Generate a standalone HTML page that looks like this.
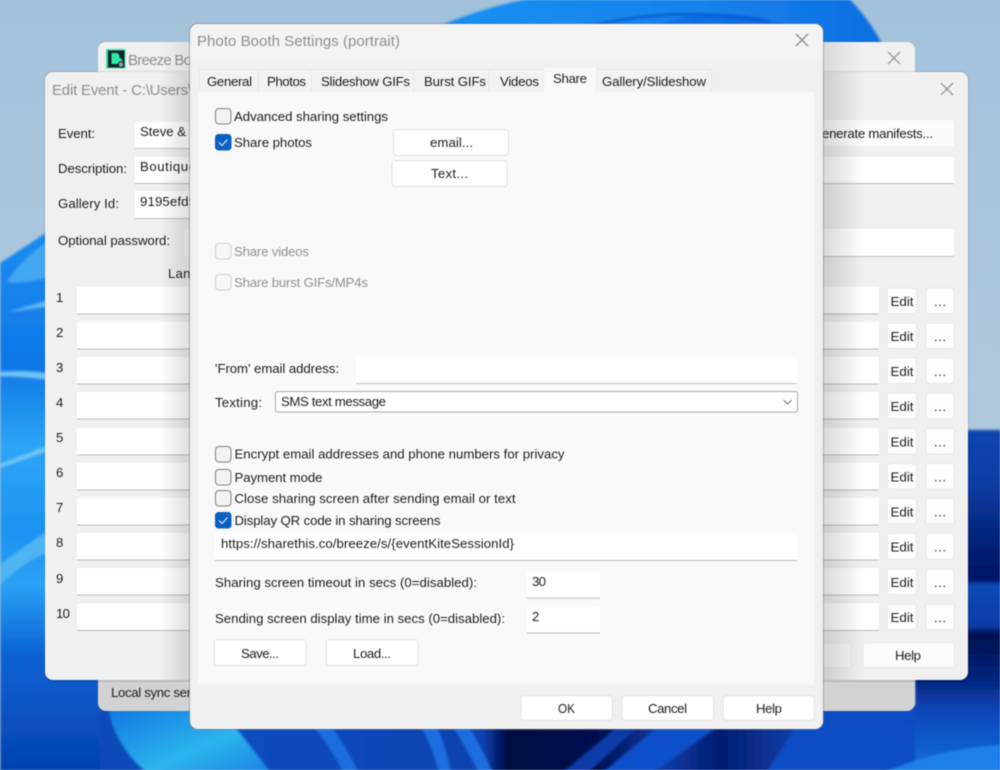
<!DOCTYPE html>
<html><head><meta charset="utf-8"><title>Photo Booth Settings</title>
<style>
html,body{margin:0;padding:0;background:#a5c3db}
body{width:1000px;height:770px;overflow:hidden}
svg{display:block;filter:blur(.45px)}
text{font-family:"Liberation Sans",sans-serif;font-size:13.2px;fill:#1c1c1c}
.d{fill:#8f8f8f}
.t{font-size:15px;fill:#8e8e8e}
</style></head><body>
<svg width="1000" height="770" viewBox="0 0 1000 770" xmlns="http://www.w3.org/2000/svg">
<defs>
<linearGradient id="sky" x1="0" y1="0" x2="0" y2="1"><stop offset="0" stop-color="#a3c2da"/><stop offset=".5" stop-color="#afc9de"/><stop offset="1" stop-color="#a8c5dc"/></linearGradient>
<linearGradient id="lft" x1="0" y1="0" x2="0" y2="1"><stop offset="0" stop-color="#1a8cf0"/><stop offset=".25" stop-color="#0e78e6"/><stop offset=".4" stop-color="#2ca6f6"/><stop offset=".55" stop-color="#1c92f2"/><stop offset=".65" stop-color="#2aa2f4"/><stop offset=".78" stop-color="#0a62d4"/><stop offset="1" stop-color="#0540ae"/></linearGradient>
<linearGradient id="bot" x1="0" y1="0" x2="1" y2="0"><stop offset="0" stop-color="#0748b8"/><stop offset=".16" stop-color="#0a4cc0"/><stop offset=".47" stop-color="#0a42b0"/><stop offset=".5" stop-color="#020a40"/><stop offset=".61" stop-color="#031050"/><stop offset=".69" stop-color="#0a3ca8"/><stop offset=".76" stop-color="#041c70"/><stop offset=".84" stop-color="#0a3aa0"/><stop offset=".87" stop-color="#0b4ec4"/><stop offset="1" stop-color="#0b4cc2"/></linearGradient>
<linearGradient id="rgt" x1="0" y1="0" x2="0" y2="1"><stop offset="0" stop-color="#0b46b0"/><stop offset=".145" stop-color="#0a3ea4"/><stop offset=".377" stop-color="#021a6c"/><stop offset=".435" stop-color="#02186a"/><stop offset=".449" stop-color="#0c49b5"/><stop offset=".565" stop-color="#0a3ca8"/><stop offset=".594" stop-color="#02104e"/><stop offset=".725" stop-color="#05267f"/><stop offset=".814" stop-color="#0a46b8"/><stop offset="1" stop-color="#1670dc"/></linearGradient>
<linearGradient id="top" x1="0" y1="0" x2="1" y2="0"><stop offset="0" stop-color="#1a90f2"/><stop offset=".6" stop-color="#1482ec"/><stop offset="1" stop-color="#0f6ee0"/></linearGradient>
<linearGradient id="cy" x1="0" y1="0" x2="1" y2="1"><stop offset="0" stop-color="#0d6fe0"/><stop offset=".6" stop-color="#2cb4ec"/><stop offset="1" stop-color="#1a80e4"/></linearGradient>
<linearGradient id="sl" x1="0" x2="1"><stop offset="0" stop-color="#000" stop-opacity="0"/><stop offset="1" stop-color="#000" stop-opacity=".13"/></linearGradient>
<linearGradient id="sr" x1="0" x2="1"><stop offset="0" stop-color="#000" stop-opacity=".15"/><stop offset="1" stop-color="#000" stop-opacity="0"/></linearGradient>
<filter id="bb" x="-10%" y="-10%" width="120%" height="120%"><feGaussianBlur stdDeviation="1.2"/></filter>
<g id="rowR"><rect x="887" y="0" width="29.5" height="25.5" rx="3" fill="#fdfdfd" stroke="#e4e4e4" stroke-width=".8"/><rect x="926" y="0" width="28" height="25.5" rx="3" fill="#fdfdfd" stroke="#e4e4e4" stroke-width=".8"/><text x="890.5" y="18" textLength="23" lengthAdjust="spacingAndGlyphs">Edit</text><text x="934" y="18" textLength="12" lengthAdjust="spacing">...</text></g>
</defs>

<!-- wallpaper -->
<rect width="1000" height="770" fill="url(#sky)"/>
<g filter="url(#bb)">
<path d="M0 263 Q25 247 50 230 L110 230 L110 775 L0 775Z" fill="url(#lft)"/>
<path d="M7 282 Q22 258 50 240 L50 277 Q25 284 7 282Z" fill="#42a8f2"/>
<path d="M8 312 L50 300 L50 306 Z" fill="#5dbcf5"/>
<path d="M0 372 Q25 370 50 374 L50 380 Q25 376 0 376Z" fill="#6cc6f8"/>
<path d="M0 464 L50 445 L50 450 L0 468Z" fill="#6ec6f6"/>
<path d="M0 565 Q25 545 50 530 L50 552 Q25 560 0 585Z" fill="#50b4f2"/>
<path d="M430 30 Q520 -10 620 -10 L840 -10 Q868 15 884 48 L430 48Z" fill="url(#top)"/>
<path d="M640 30 Q720 0 790 26 L800 34 L640 34Z" fill="#0e6ae0" opacity=".8"/>
<path d="M590 26 Q680 5 770 22" fill="none" stroke="#0b5ad0" stroke-width="3"/>
<rect x="915" y="430" width="95" height="345" fill="url(#rgt)"/>
<rect x="100" y="705" width="815" height="70" fill="url(#bot)"/>
<path d="M107 700 Q112 745 150 775 L272 775 Q250 745 225 715 L200 700Z" fill="url(#cy)"/>
<path d="M312 725 Q330 745 345 775 L360 775 Q345 745 330 725Z" fill="#1d6ee0"/>
<path d="M420 725 Q432 745 440 775 L452 775 Q445 745 436 725Z" fill="#1d6ee0"/>
<path d="M452 725 Q465 745 480 775 L494 775 Q480 745 468 725Z" fill="#1d6ee0"/>
<path d="M560 775 L620 725 L640 725 L585 775Z" fill="#0a3aa8"/>
<path d="M600 775 L660 725 L720 725 L650 775Z" fill="#0b50c8"/>
<path d="M797 725 L765 775 L915 775 L915 725Z" fill="#0b4ec4"/>
<path d="M880 775 Q930 750 1000 745 L1000 775Z" fill="#1a80e8"/>
</g>

<!-- Breeze window -->
<path d="M98 50 a8 8 0 0 1 8 -8 h801 a8 8 0 0 1 8 8 v653 a8 8 0 0 1 -8 8 h-801 a8 8 0 0 1 -8 -8z" fill="#d2d2d2"/>
<path d="M98 72 V50 a8 8 0 0 1 8 -8 h801 a8 8 0 0 1 8 8 v22z" fill="#f0f0f0"/>
<rect x="106" y="49" width="19.5" height="19.5" fill="#2ee8a0"/>
<rect x="108" y="50.5" width="16.5" height="17" fill="#18222e"/>
<path d="M111.5 53 h4.5 q3.5 0 3.5 4 v1 q3 .5 3 4 v2 h-11z" fill="#2ee8a0"/>
<circle cx="121" cy="64.5" r="2.7" fill="#9aa2aa" stroke="#18222e"/>
<text class="t" x="128" y="65" textLength="64" lengthAdjust="spacing">Breeze Bo</text>
<path d="M888 52 L900 64 M900 52 L888 64" stroke="#8b8b8b" stroke-width="1.2" fill="none"/>
<text x="111" y="697" textLength="80" lengthAdjust="spacing">Local sync ser</text>

<!-- Edit Event window -->
<rect x="44" y="71" width="925" height="611" rx="8.5" fill="#000" opacity=".1"/>
<rect x="45" y="72" width="923" height="608" rx="8" fill="#f0f0f0"/>
<text class="t" x="52" y="95" textLength="140" lengthAdjust="spacing">Edit Event - C:\Users\</text>
<path d="M941 83 L953 95 M953 83 L941 95" stroke="#8b8b8b" stroke-width="1.2" fill="none"/>
<text x="58" y="138" textLength="37" lengthAdjust="spacing">Event:</text>
<text x="58" y="173" textLength="69" lengthAdjust="spacing">Description:</text>
<text x="58" y="208" textLength="61" lengthAdjust="spacing">Gallery Id:</text>
<text x="58" y="245" textLength="112" lengthAdjust="spacing">Optional password:</text>
<text x="168" y="278" textLength="30" lengthAdjust="spacing">Lang</text>
<g fill="#fff" stroke="none">
<rect x="135" y="122" width="60" height="26"/><rect x="135" y="157" width="60" height="26"/><rect x="135" y="191" width="60" height="27"/>
<rect x="184" y="229" width="10" height="27" fill="#f8f8f8"/>
<rect x="820" y="157" width="134" height="26"/><rect x="820" y="229" width="134" height="27"/>
<rect x="820" y="120" width="134" height="26" rx="3" fill="#fbfbfb"/>
</g>
<path d="M135 148.5H195M135 183.5H195M135 218.5H195M820 183.5H954M820 256.5H954" stroke="#bdbdbd" stroke-width="1"/>
<text x="140" y="136" textLength="46" lengthAdjust="spacing">Steve &amp;</text>
<text x="140" y="171" textLength="56" lengthAdjust="spacing">Boutique</text>
<text x="140" y="206" textLength="56" lengthAdjust="spacing">9195efd5</text>
<text x="812" y="138" textLength="121" lengthAdjust="spacing">Generate manifests...</text>
<g fill="#fff">
<rect x="77" y="287" width="120" height="26.5"/><rect x="77" y="322" width="120" height="26.5"/><rect x="77" y="357" width="120" height="26.5"/><rect x="77" y="392" width="120" height="26.5"/><rect x="77" y="428" width="120" height="26.5"/><rect x="77" y="463" width="120" height="26.5"/><rect x="77" y="498" width="120" height="26.5"/><rect x="77" y="533" width="120" height="26.5"/><rect x="77" y="568" width="120" height="26.5"/><rect x="77" y="603.5" width="120" height="26.5"/>
<rect x="820" y="287" width="59" height="26.5"/><rect x="820" y="322" width="59" height="26.5"/><rect x="820" y="357" width="59" height="26.5"/><rect x="820" y="392" width="59" height="26.5"/><rect x="820" y="428" width="59" height="26.5"/><rect x="820" y="463" width="59" height="26.5"/><rect x="820" y="498" width="59" height="26.5"/><rect x="820" y="533" width="59" height="26.5"/><rect x="820" y="568" width="59" height="26.5"/><rect x="820" y="603.5" width="59" height="26.5"/>
</g>
<path d="M77 314H197M77 349H197M77 384H197M77 419H197M77 455H197M77 490H197M77 525H197M77 560H197M77 595H197M77 630.5H197M820 314H879M820 349H879M820 384H879M820 419H879M820 455H879M820 490H879M820 525H879M820 560H879M820 595H879M820 630.5H879" stroke="#bbb" stroke-width="1"/>
<text x="56" y="302">1</text><text x="56" y="337">2</text><text x="56" y="372">3</text><text x="56" y="407">4</text><text x="56" y="442">5</text><text x="56" y="477">6</text><text x="56" y="512">7</text><text x="56" y="547">8</text><text x="56" y="618" textLength="14" lengthAdjust="spacing">10</text><text x="56" y="583">9</text>
<use href="#rowR" y="288"/><use href="#rowR" y="323"/><use href="#rowR" y="358"/><use href="#rowR" y="393"/><use href="#rowR" y="428.5"/><use href="#rowR" y="463.5"/><use href="#rowR" y="498.5"/><use href="#rowR" y="533.5"/><use href="#rowR" y="569"/><use href="#rowR" y="604"/>
<rect x="820" y="643" width="31" height="24.5" rx="3" fill="#f8f8f8" stroke="#e4e4e4" stroke-width=".8"/>
<rect x="863" y="643" width="91" height="24.5" rx="3" fill="#fcfcfc" stroke="#e6e6e6" stroke-width=".8"/>
<text x="895" y="660" textLength="26" lengthAdjust="spacing">Help</text>

<!-- soft shadow around settings window -->
<rect x="160" y="72" width="30" height="608" fill="url(#sl)"/>
<rect x="823" y="72" width="40" height="608" fill="url(#sr)"/>
<rect x="160" y="42" width="30" height="30" fill="url(#sl)" opacity=".6"/>
<rect x="823" y="42" width="40" height="30" fill="url(#sr)" opacity=".6"/>

<!-- Settings window -->
<rect x="189" y="23" width="635" height="707" rx="8.5" fill="#777" opacity=".5"/>
<rect x="190" y="24" width="633" height="705" rx="8" fill="#f0f0f0"/>
<path d="M190 60 V32 a8 8 0 0 1 8-8 H815 a8 8 0 0 1 8 8 V60Z" fill="#f3f3f3"/>
<text class="t" x="197" y="46" textLength="203" lengthAdjust="spacing">Photo Booth Settings (portrait)</text>
<path d="M796 34 L808 46 M808 34 L796 46" stroke="#8b8b8b" stroke-width="1.3" fill="none"/>
<g fill="#f2f2f2" stroke="#e6e6e6" stroke-width="1">
<path d="M199.500 92V69.500H258.500V92"/><path d="M258.500 92V69.500H311.500V92"/><path d="M311.500 92V69.500H413.500V92"/><path d="M413.500 92V69.500H488.500V92"/><path d="M488.500 92V69.500H544V92"/><path d="M596 92V69.500H711.500V92"/>
</g>
<rect x="198" y="92" width="616.500" height="593" fill="#f9f9f9"/>
<path d="M544 93V67.500H596V93Z" fill="#f9f9f9"/>
<text x="207" y="86" textLength="45" lengthAdjust="spacing">General</text>
<text x="267" y="86" textLength="39" lengthAdjust="spacing">Photos</text>
<text x="321" y="86" textLength="89" lengthAdjust="spacing">Slideshow GIFs</text>
<text x="424" y="86" textLength="62" lengthAdjust="spacing">Burst GIFs</text>
<text x="500" y="86" textLength="39" lengthAdjust="spacing">Videos</text>
<text x="553" y="83" textLength="34" lengthAdjust="spacing">Share</text>
<text x="602" y="86" textLength="104" lengthAdjust="spacing">Gallery/Slideshow</text>

<!-- checkboxes -->
<g fill="#f2f2f2" stroke="#7f7f7f" stroke-width="1">
<rect x="215.500" y="108.500" width="15.500" height="15.500" rx="3.500"/>
<rect x="215.500" y="446.500" width="15.500" height="15.500" rx="3.500"/>
<rect x="215.500" y="469.500" width="15.500" height="15.500" rx="3.500"/>
<rect x="215.500" y="490.500" width="15.500" height="15.500" rx="3.500"/>
</g>
<g fill="#f7f7f7" stroke="#cfcfcf" stroke-width="1">
<rect x="215.500" y="243.500" width="15.500" height="15.500" rx="3.500"/>
<rect x="215.500" y="274.500" width="15.500" height="15.500" rx="3.500"/>
</g>
<g fill="#0a5fc2">
<rect x="215" y="134" width="16.500" height="16.500" rx="3.500"/>
<rect x="215" y="512" width="16.500" height="16.500" rx="3.500"/>
</g>
<path d="M219 142.500l3 3 5.500-6M219 520.500l3 3 5.500-6" stroke="#e8f2fb" stroke-width="1.100" fill="none"/>
<text x="234" y="121" textLength="154" lengthAdjust="spacing">Advanced sharing settings</text>
<text x="234" y="147" textLength="78" lengthAdjust="spacing">Share photos</text>
<text class="d" x="234" y="256" textLength="75" lengthAdjust="spacing">Share videos</text>
<text class="d" x="234" y="287" textLength="134" lengthAdjust="spacing">Share burst GIFs/MP4s</text>
<text x="234.500" y="458.500" textLength="330" lengthAdjust="spacing">Encrypt email addresses and phone numbers for privacy</text>
<text x="234.500" y="482" textLength="88" lengthAdjust="spacing">Payment mode</text>
<text x="234.500" y="503" textLength="281" lengthAdjust="spacing">Close sharing screen after sending email or text</text>
<text x="234.500" y="525" textLength="206" lengthAdjust="spacing">Display QR code in sharing screens</text>

<!-- buttons -->
<g fill="#fefefe" stroke="#e2e2e2" stroke-width="1">
<rect x="393.500" y="129.500" width="115" height="26" rx="3"/>
<rect x="392" y="160.500" width="115" height="26" rx="3"/>
<rect x="214.500" y="639.500" width="91.500" height="26" rx="3"/>
<rect x="326.500" y="639.500" width="91.500" height="26" rx="3"/>
<rect x="521" y="695.500" width="91.500" height="25" rx="3"/>
<rect x="622" y="695.500" width="91.500" height="25" rx="3"/>
<rect x="723" y="695.500" width="91.500" height="25" rx="3"/>
</g>
<text x="430" y="147" textLength="43" lengthAdjust="spacing">email...</text>
<text x="431" y="178" textLength="37" lengthAdjust="spacing">Text...</text>
<text x="241" y="658" textLength="38" lengthAdjust="spacing">Save...</text>
<text x="353" y="658" textLength="38" lengthAdjust="spacing">Load...</text>
<text x="558" y="713" textLength="17" lengthAdjust="spacingAndGlyphs">OK</text>
<text x="648" y="713" textLength="39" lengthAdjust="spacing">Cancel</text>
<text x="756" y="713" textLength="26" lengthAdjust="spacing">Help</text>

<!-- fields -->
<text x="215" y="373" textLength="124" lengthAdjust="spacing">'From' email address:</text>
<text x="215" y="407" textLength="47" lengthAdjust="spacing">Texting:</text>
<text x="215" y="587" textLength="262" lengthAdjust="spacing">Sharing screen timeout in secs (0=disabled):</text>
<text x="215" y="623" textLength="290" lengthAdjust="spacing">Sending screen display time in secs (0=disabled):</text>
<g fill="#fff">
<rect x="356" y="357" width="441" height="26"/>
<rect x="215" y="533" width="582" height="27"/>
<rect x="527" y="571.500" width="73" height="26"/>
<rect x="527" y="606.500" width="73" height="26"/>
</g>
<path d="M356 383.500H797M215 560.500H797M527 598H600M527 633H600" stroke="#bdbdbd" stroke-width="1"/>
<rect x="275.500" y="391.500" width="522" height="20.500" rx="2" fill="#fff" stroke="#a8a8a8"/>
<path d="M783.500 400l4 4 4-4" stroke="#777" stroke-width="1.100" fill="none"/>
<text x="281" y="406" textLength="105" lengthAdjust="spacing">SMS text message</text>
<text x="221" y="548" textLength="293" lengthAdjust="spacing">https://sharethis.co/breeze/s/{eventKiteSessionId}</text>
<text x="532" y="586" textLength="14" lengthAdjust="spacing">30</text>
<text x="532" y="621">2</text>
</svg>
</body></html>
